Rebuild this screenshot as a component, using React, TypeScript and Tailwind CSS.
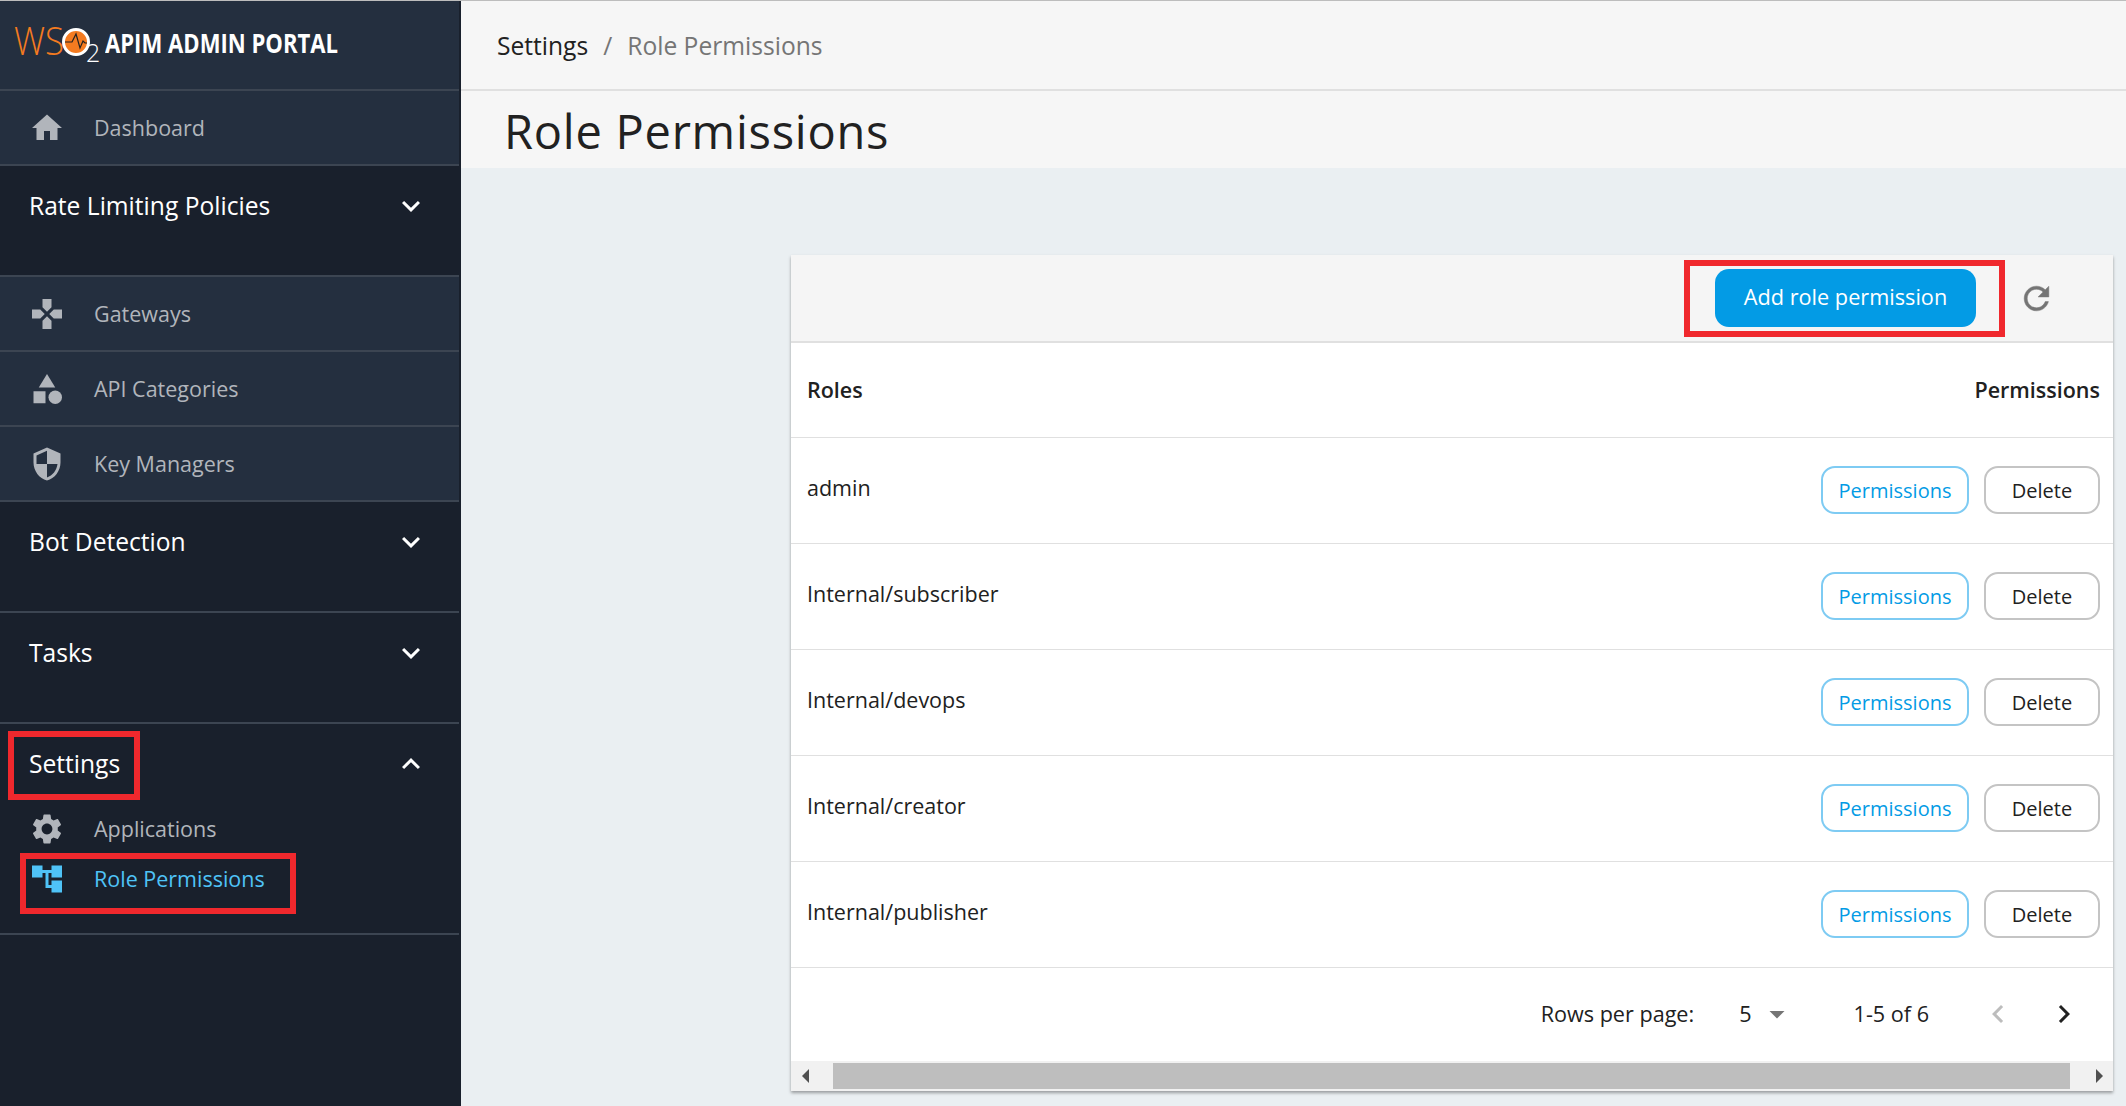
const P = {
  home: <path d="M10 20v-6h4v6h5v-8h3L12 3 2 12h3v8z" />,
  game: <path d="M15 7.5V2H9v5.5l3 3 3-3zM7.5 9H2v6h5.5l3-3-3-3zM9 16.5V22h6v-5.5l-3-3-3 3zM16.5 9l-3 3 3 3H22V9h-5.5z" />,
  cat: <><path d="M12 2l-5.5 9h11z" /><circle cx="17.5" cy="17.5" r="4.5" /><path d="M3 13.5h8v8H3z" /></>,
  shield: <path d="M12 1L3 5v6c0 5.55 3.84 10.74 9 12 5.16-1.26 9-6.45 9-12V5l-9-4zm0 10.99h7c-.53 4.12-3.28 7.79-7 8.94V12H5V6.3l7-3.11v8.8z" />,
  gear: <path d="M19.14,12.94c0.04-0.3,0.06-0.61,0.06-0.94c0-0.32-0.02-0.64-0.07-0.94l2.03-1.58c0.18-0.14,0.23-0.41,0.12-0.61 l-1.92-3.32c-0.12-0.22-0.37-0.29-0.59-0.22l-2.39,0.96c-0.5-0.38-1.03-0.7-1.62-0.94L14.4,2.81c-0.04-0.24-0.24-0.41-0.48-0.41 h-3.84c-0.24,0-0.43,0.17-0.47,0.41L9.25,5.35C8.66,5.59,8.12,5.92,7.63,6.29L5.24,5.33c-0.22-0.08-0.47,0-0.59,0.22L2.74,8.87 C2.62,9.08,2.66,9.34,2.86,9.48l2.03,1.58C4.84,11.36,4.8,11.69,4.8,12s0.02,0.64,0.07,0.94l-2.03,1.58 c-0.18,0.14-0.23,0.41-0.12,0.61l1.92,3.32c0.12,0.22,0.37,0.29,0.59,0.22l2.39-0.96c0.5,0.38,1.03,0.7,1.62,0.94l0.36,2.54 c0.05,0.24,0.24,0.41,0.48,0.41h3.84c0.24,0,0.44-0.17,0.47-0.41l0.36-2.54c0.59-0.24,1.13-0.56,1.62-0.94l2.39,0.96 c0.22,0.08,0.47,0,0.59-0.22l1.92-3.32c0.12-0.22,0.07-0.47-0.12-0.61L19.14,12.94z M12,15.6c-1.98,0-3.6-1.62-3.6-3.6 s1.62-3.6,3.6-3.6s3.6,1.62,3.6,3.6S13.98,15.6,12,15.6z" />,
  tree: <path d="M22 11V3h-7v3H9V3H2v8h7V8h2v10h4v3h7v-8h-7v3h-2V8h2v3z" />,
  down: <path d="M16.59 8.59L12 13.17 7.41 8.59 6 10l6 6 6-6z" />,
  up: <path d="M12 8l-6 6 1.41 1.41L12 10.83l4.59 4.58L18 14z" />,
  refresh: <path stroke="currentColor" strokeWidth="0.3" d="M17.65 6.35C16.2 4.9 14.21 4 12 4c-4.42 0-7.99 3.58-7.99 8s3.57 8 7.99 8c3.73 0 6.84-2.55 7.73-6h-2.08c-.82 2.33-3.04 4-5.65 4-3.31 0-6-2.69-6-6s2.69-6 6-6c1.66 0 3.14.69 4.22 1.78L13 11h7V4l-2.35 2.35z" />,
  left: <path d="M15.41 7.41L14 6l-6 6 6 6 1.41-1.41L10.83 12z" />,
  right: <path d="M10 6L8.59 7.41 13.17 12l-4.58 4.59L10 18l6-6z" />,
  drop: <path d="M7 10l5 5 5-5z" />,
};

function Icon({ d, className }: { d: React.ReactNode; className: string }) {
  return (
    <svg viewBox="0 0 24 24" fill="currentColor" className={className}>
      {d}
    </svg>
  );
}

function Logo() {
  return (
    <svg width="92" height="54" viewBox="0 0 92 54" className="shrink-0 overflow-visible" style={{ fontFamily: '"Open Sans", sans-serif' }}>
      <text x="1" y="37" fontSize="38" fontWeight="300" fill="#f47b20" textLength="50" lengthAdjust="spacingAndGlyphs">WS</text>
      <circle cx="63" cy="24" r="12.5" fill="#f47b20" stroke="#ffffff" strokeWidth="3" />
      <path d="M52 24H59L63 16L67 30L70 23L72 25H74" fill="none" stroke="#222222" strokeWidth="1.2" />
      <text x="73" y="44" fontSize="25" fontWeight="300" fill="#ffffff">2</text>
    </svg>
  );
}

function NavRow({ d, label }: { d: React.ReactNode; label: string }) {
  return (
    <div className="flex h-[75px] items-center border-b-2 border-[#3c4552] bg-[#242f3f] pl-[29px] text-[#b1b5bb]">
      <Icon d={d} className="h-[36px] w-[36px]" />
      <span className="ml-[29px] pt-[2px] text-[21.5px]">{label}</span>
    </div>
  );
}

function Section({ label, open, children }: { label: string; open?: boolean; children?: React.ReactNode }) {
  return (
    <div className={`border-b-2 border-[#3c4552] ${open ? "h-[211px]" : "h-[111px]"}`}>
      <div className="flex h-[80px] items-center justify-between pl-[29px] pr-[30px] text-white">
        <span className={`text-[24.6px] ${open ? "" : "pt-[1px]"}`}>{label}</span>
        <Icon d={open ? P.up : P.down} className="h-[36px] w-[36px]" />
      </div>
      {children}
    </div>
  );
}

const rows = ["admin", "Internal/subscriber", "Internal/devops", "Internal/creator", "Internal/publisher"];

export default function App() {
  return (
    <div className="relative flex h-[1106px] w-[2126px] overflow-hidden border-t border-[#bdbdbd] bg-[#eaeff2] text-[#212121]" style={{ fontFamily: '"Open Sans", sans-serif' }}>
      <aside className="h-full w-[461px] shrink-0 border-r-2 border-[#19202c] bg-[#19202c]">
        <div className="flex h-[90px] items-center border-b-2 border-[#3c4552] bg-[#242f3f] pl-[13px]">
          <div className="flex items-center pb-[1px]">
            <Logo />
            <span className="origin-left pb-[2px] text-[26px] font-bold text-white [transform:scaleX(0.85)]">APIM ADMIN PORTAL</span>
          </div>
        </div>
        <NavRow d={P.home} label="Dashboard" />
        <Section label="Rate Limiting Policies" />
        <NavRow d={P.game} label="Gateways" />
        <NavRow d={P.cat} label="API Categories" />
        <NavRow d={P.shield} label="Key Managers" />
        <Section label="Bot Detection" />
        <Section label="Tasks" />
        <Section label="Settings" open>
          <div className="flex h-[50px] items-center pl-[29px] text-[#b1b5bb]">
            <Icon d={P.gear} className="h-[36px] w-[36px]" />
            <span className="ml-[29px] text-[21.5px]">Applications</span>
          </div>
          <div className="flex h-[50px] items-center pl-[29px] text-[#4fc3f7]">
            <Icon d={P.tree} className="h-[36px] w-[36px]" />
            <span className="ml-[29px] text-[21.5px]">Role Permissions</span>
          </div>
        </Section>
      </aside>

      <main className="flex min-w-0 flex-1 flex-col">
        <div className="flex h-[90px] shrink-0 items-center gap-[15px] border-b-2 border-[#e0e0e0] bg-[#f6f6f6] pl-[36px] pt-[2px] text-[24.6px]">
          <span>Settings</span>
          <span className="text-[#757575]">/</span>
          <span className="text-[#757575]">Role Permissions</span>
        </div>
        <div className="flex h-[77px] shrink-0 items-center bg-[#f6f6f6] pl-[43px] pt-[3px]">
          <h1 className="text-[47px] tracking-[0.75px]">Role Permissions</h1>
        </div>
        <div className="ml-[330px] mr-[13px] mt-[87px] flex h-[836px] flex-col bg-white shadow-[0_2px_3px_rgba(0,0,0,0.35)]">
          <div className="flex h-[88px] shrink-0 items-center justify-end border-b-2 border-[#e0e0e0] bg-[#f5f5f5] pr-[58px]">
            <button className="flex h-[58px] w-[261px] items-center justify-center rounded-[14px] bg-[#039be5] pb-[1px] text-[21.7px] text-white">Add role permission</button>
            <Icon d={P.refresh} className="ml-[42px] h-[37px] w-[37px] text-[#757575]" />
          </div>
          <table className="w-full border-collapse">
            <thead>
              <tr className="h-[94px] border-b border-[#e0e0e0] text-left text-[21.5px]">
                <th className="pl-[16px] font-semibold">Roles</th>
                <th className="pr-[13px] text-right font-semibold">Permissions</th>
              </tr>
            </thead>
            <tbody>
              {rows.map((r) => (
                <tr key={r} className="h-[106px] border-b border-[#e0e0e0] text-[21.5px]">
                  <td className="pb-[3px] pl-[16px]">{r}</td>
                  <td className="pr-[13px]">
                    <div className="flex justify-end gap-[15px]">
                      <button className="h-[48px] w-[148px] rounded-[14px] border-2 border-[#7ecbf3] pt-[1px] text-[20px] text-[#039be5]">Permissions</button>
                      <button className="h-[48px] w-[116px] rounded-[14px] border-2 border-[#c4c4c4] pt-[1px] text-[20px]">Delete</button>
                    </div>
                  </td>
                </tr>
              ))}
            </tbody>
          </table>
          <div className="flex flex-1 items-center justify-end text-[21.6px]">
            <span>Rows per page:</span>
            <span className="ml-[45px]">5</span>
            <Icon d={P.drop} className="ml-[7px] h-[36px] w-[36px] text-[#757575]" />
            <span className="ml-[59px]">1-5 of 6</span>
            <Icon d={P.left} className="ml-[51px] h-[36px] w-[36px] text-[#bdbdbd]" />
            <Icon d={P.right} className="ml-[30px] mr-[31px] h-[36px] w-[36px] text-[#212121]" />
          </div>
          <div className="flex h-[30px] shrink-0 items-center bg-[#f1f1f1]">
            <div className="flex w-[42px] justify-center pr-[14px]">
              <div className="h-0 w-0 border-y-[7px] border-r-[7px] border-y-transparent border-r-[#505050]" />
            </div>
            <div className="h-[26px] flex-1 bg-[#bebebe]" />
            <div className="flex w-[43px] justify-center pl-[16px]">
              <div className="h-0 w-0 border-y-[7px] border-l-[7px] border-y-transparent border-l-[#505050]" />
            </div>
          </div>
        </div>
      </main>

      <div className="absolute left-[8px] top-[730px] h-[69px] w-[132px] border-[6px] border-[#f0282d]" />
      <div className="absolute left-[20px] top-[852px] h-[61px] w-[276px] border-[6px] border-[#f0282d]" />
      <div className="absolute left-[1684px] top-[259px] h-[77px] w-[321px] border-[6px] border-[#f0282d]" />
    </div>
  );
}
